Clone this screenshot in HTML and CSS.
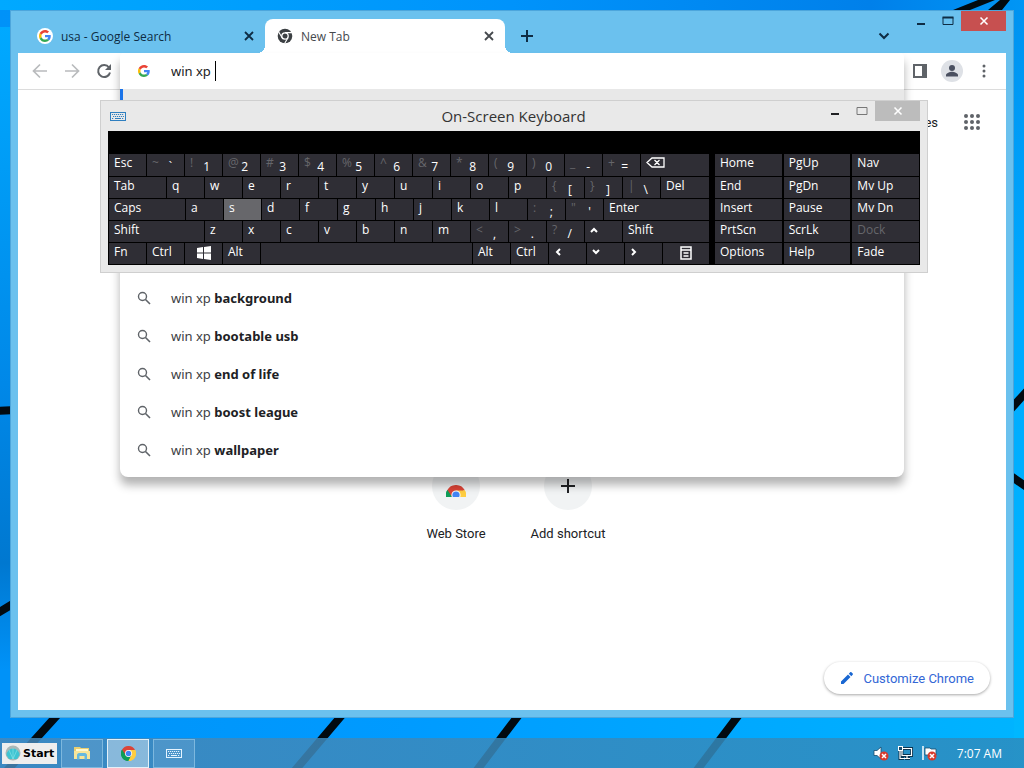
FILE: index.html
```html
<!DOCTYPE html>
<html lang="en">
<head>
  <meta charset="UTF-8">
  <meta name="viewport" content="width=device-width, initial-scale=1.0">
  <title>Desktop</title>
  <link rel="stylesheet" href="styles.css">
</head>
<body>
  <!-- shared icons -->
  <svg class="sprite" aria-hidden="true">
    <symbol id="google" viewBox="0 0 48 48">
      <path fill="#ea4335" d="M24 9.500c3.540 0 6.710 1.220 9.210 3.600l6.850-6.850C35.900 2.380 30.470 0 24 0 14.620 0 6.510 5.380 2.560 13.220l7.980 6.190C12.430 13.720 17.740 9.500 24 9.500z"/>
      <path fill="#4285f4" d="M46.980 24.550c0-1.570-.15-3.090-.38-4.550H24v9.020h12.940c-.58 2.960-2.260 5.480-4.780 7.180l7.730 6c4.510-4.180 7.090-10.360 7.090-17.650z"/>
      <path fill="#fbbc05" d="M10.530 28.590c-.48-1.450-.76-2.990-.76-4.590s.27-3.140.76-4.590l-7.980-6.190C.92 16.460 0 20.120 0 24c0 3.880.92 7.540 2.560 10.780l7.970-6.190z"/>
      <path fill="#34a853" d="M24 48c6.480 0 11.930-2.130 15.890-5.810l-7.730-6c-2.150 1.450-4.920 2.300-8.160 2.300-6.260 0-11.570-4.220-13.470-9.910l-7.980 6.190C6.510 42.620 14.620 48 24 48z"/>
    </symbol>
    <symbol id="chrome" viewBox="0 0 48 48">
      <path fill="#db4437" d="M24 24L3.200 12A24 24 0 0 1 44.800 12z"/>
      <path fill="#0f9d58" d="M24 24L3.200 12A24 24 0 0 0 24 48z"/>
      <path fill="#ffcd40" d="M24 24L24 48A24 24 0 0 0 44.800 12z"/>
      <path fill="#db4437" d="M24 13h20.800L24 12 3.200 12l11.300 17.500z"/>
      <path fill="#0f9d58" d="M3.200 12l11.300 17.500L24 35l9.500-5.500L24 48A24 24 0 0 1 3.200 12z"/>
      <path fill="#ffcd40" d="M24 13h21.300A24 24 0 0 1 24 48l9.500-18.500z"/>
      <circle cx="24" cy="24" r="11" fill="#fff"/>
      <circle cx="24" cy="24" r="8.700" fill="#4285f4"/>
    </symbol>
    <symbol id="close" viewBox="0 0 16 16">
      <path d="M4 4l8 8M12 4l-8 8" fill="none" stroke="currentColor" stroke-width="1.800"/>
    </symbol>
    <symbol id="search" viewBox="0 0 16 16">
      <circle cx="6.500" cy="6.500" r="4" fill="none" stroke="#5f6368" stroke-width="1.400"/>
      <path d="M9.500 9.500l4.500 4.500" stroke="#5f6368" stroke-width="1.600"/>
    </symbol>
    <symbol id="keyboard" viewBox="0 0 16 9">
      <rect x=".5" y=".5" width="15" height="8" fill="none" stroke="currentColor"/>
      <path d="M2 2.500h12M3 4.500h11M2 6.500h2M12 6.500h2" stroke="currentColor" stroke-dasharray="1.200 .8"/>
      <path d="M5 6.500h6" stroke="currentColor"/>
    </symbol>
  </svg>

  <div class="desktop">
    <svg class="wallpaper" viewBox="0 0 1024 768" preserveAspectRatio="none" aria-hidden="true">
      <path d="M953 10L978 0h17l-25 10zM988 10l12-10h10l-8 10z" fill="#020a10"/>
      <g stroke="#020a10" stroke-width="8" fill="none">
        <path d="M-4 411l20-1M-4 614l20-12"/>
        <path d="M1008 412l20-22M1008 474l20 14"/>
        <path d="M60 712L4 774M348 708l-56 66M524 708l-50 66M744 708l-50 66"/>
      </g>
    </svg>

    <div class="window browser">
      <div class="titlebar">
        <div class="tabs">
          <div class="tab">
            <span class="favicon"><svg width="12" height="12"><use href="#google"/></svg></span>
            <span class="tab-title">usa - Google Search</span>
            <button class="tab-close" aria-label="Close tab"><svg width="16" height="16"><use href="#close"/></svg></button>
          </div>
          <div class="tab active">
            <svg width="16" height="16" viewBox="0 0 16 16">
              <circle cx="8" cy="8" r="7.300" fill="#3c4043"/>
              <circle cx="8" cy="8" r="3.200" fill="none" stroke="#fff" stroke-width="1.300"/>
              <path d="M8 4.600h7M5.100 9.700L1.600 3.800M10.900 9.700l-3.400 6" stroke="#fff" stroke-width="1.100"/>
            </svg>
            <span class="tab-title">New Tab</span>
            <button class="tab-close" aria-label="Close tab"><svg width="16" height="16"><use href="#close"/></svg></button>
          </div>
        </div>
        <button class="new-tab" aria-label="New tab"><svg width="14" height="14" viewBox="0 0 14 14"><path d="M7 1v12M1 7h12" stroke="currentColor" stroke-width="2"/></svg></button>
        <button class="tab-search" aria-label="Search tabs"><svg width="12" height="8" viewBox="0 0 12 8"><path d="M1.500 1.500L6 6l4.500-4.500" fill="none" stroke="currentColor" stroke-width="2"/></svg></button>
        <div class="controls">
          <button class="control" aria-label="Minimize"><svg width="12" height="12" viewBox="0 0 12 12"><path d="M2 9h8" stroke="currentColor" stroke-width="2"/></svg></button>
          <button class="control" aria-label="Maximize"><svg width="12" height="12" viewBox="0 0 12 12"><path d="M1 2.500h10v7H1z" fill="none" stroke="currentColor"/><path d="M.5 2.500h11" stroke="currentColor" stroke-width="2"/></svg></button>
          <button class="control close" aria-label="Close"><svg width="14" height="14"><use href="#close"/></svg></button>
        </div>
      </div>

      <div class="toolbar">
        <button class="tool muted" aria-label="Back"><svg width="16" height="16" viewBox="0 0 16 16"><path d="M15 8H2M8 1.500L1.500 8 8 14.500" fill="none" stroke="currentColor" stroke-width="1.700"/></svg></button>
        <button class="tool muted" aria-label="Forward"><svg width="16" height="16" viewBox="0 0 16 16"><path d="M1 8h13M8 1.500L14.500 8 8 14.500" fill="none" stroke="currentColor" stroke-width="1.700"/></svg></button>
        <button class="tool" aria-label="Reload"><svg width="16" height="16" viewBox="0 0 16 16"><path d="M13 4.500A6 6 0 1 0 14 9.500" fill="none" stroke="currentColor" stroke-width="2"/><path d="M15 1v6H9z" fill="currentColor"/></svg></button>
        <div class="omnibox">
          <div class="omnibox-popup">
            <div class="omnibox-row">
              <svg width="12" height="12"><use href="#google"/></svg>
              <label class="query"><input type="text" value="win xp " aria-label="Address and search bar"><span class="caret"></span></label>
            </div>
            <ul class="suggestions">
              <li class="suggestion selected"></li>
              <li class="suggestion first"><svg width="16" height="16"><use href="#search"/></svg><span>win xp <b>background</b></span></li>
              <li class="suggestion"><svg width="16" height="16"><use href="#search"/></svg><span>win xp <b>bootable usb</b></span></li>
              <li class="suggestion"><svg width="16" height="16"><use href="#search"/></svg><span>win xp <b>end of life</b></span></li>
              <li class="suggestion"><svg width="16" height="16"><use href="#search"/></svg><span>win xp <b>boost league</b></span></li>
              <li class="suggestion"><svg width="16" height="16"><use href="#search"/></svg><span>win xp <b>wallpaper</b></span></li>
            </ul>
          </div>
        </div>
        <button class="tool" aria-label="Side panel"><svg width="14" height="14" viewBox="0 0 14 14"><rect x="1" y="1" width="12" height="12" fill="none" stroke="currentColor" stroke-width="2"/><path d="M9 1h4v12H9z" fill="currentColor"/></svg></button>
        <button class="tool" aria-label="Profile"><svg width="22" height="22" viewBox="0 0 22 22"><circle cx="11" cy="11" r="11" fill="#dee1e6"/><circle cx="11" cy="8" r="3" fill="#4a5060"/><path d="M5 16.500V15c0-2 4-3.300 6-3.300s6 1.300 6 3.300v1.500z" fill="#4a5060"/></svg></button>
        <button class="tool" aria-label="Menu"><svg width="4" height="14" viewBox="0 0 4 14" fill="currentColor"><circle cx="2" cy="2" r="1.500"/><circle cx="2" cy="7" r="1.500"/><circle cx="2" cy="12" r="1.500"/></svg></button>
      </div>

      <div class="page">
        <div class="page-header">
          <a href="#">Images</a>
          <button class="apps" aria-label="Google apps">
            <svg width="18" height="18" viewBox="0 0 18 18" fill="#5f6368"><circle cx="3" cy="3" r="2"/><circle cx="9" cy="3" r="2"/><circle cx="15" cy="3" r="2"/><circle cx="3" cy="9" r="2"/><circle cx="9" cy="9" r="2"/><circle cx="15" cy="9" r="2"/><circle cx="3" cy="15" r="2"/><circle cx="9" cy="15" r="2"/><circle cx="15" cy="15" r="2"/></svg>
          </button>
        </div>
        <div class="shortcuts">
          <a class="shortcut" href="#">
            <span class="tile"><svg width="20" height="22" viewBox="0 -24 48 52.800"><use href="#chrome" width="48" height="48"/></svg></span>
            <span>Web Store</span>
          </a>
          <a class="shortcut" href="#">
            <span class="tile"><svg width="14" height="14" viewBox="0 0 14 14"><path d="M7 0v14M0 7h14" stroke="#202124" stroke-width="2"/></svg></span>
            <span>Add shortcut</span>
          </a>
        </div>
        <button class="customize">
          <svg width="14" height="14" viewBox="0 0 14 14" fill="#1967d2"><path d="M1 10.500V13h2.500l7-7L8 3.500zM8.800 2.700l1.400-1.400c.4-.4.800-.4 1.200 0l1.300 1.300c.4.400.4.800 0 1.200l-1.400 1.400z"/></svg>
          Customize Chrome
        </button>
      </div>
    </div>

    <div class="window osk">
      <div class="osk-title">
        <svg class="osk-icon" width="16" height="9"><use href="#keyboard"/></svg>
        <span class="osk-name">On-Screen Keyboard</span>
        <div class="controls">
          <button class="control" aria-label="Minimize"><svg width="12" height="12" viewBox="0 0 12 12"><path d="M2 9h8" stroke="currentColor" stroke-width="2"/></svg></button>
          <button class="control faded" aria-label="Maximize"><svg width="12" height="12" viewBox="0 0 12 12"><path d="M1 2.500h10v7H1z" fill="none" stroke="currentColor"/></svg></button>
          <button class="control close" aria-label="Close"><svg width="14" height="14"><use href="#close"/></svg></button>
        </div>
      </div>
      <div class="osk-body">
        <div class="keys">
          <div class="row tall">
            <button class="key">Esc</button>
            <button class="key dual"><i>~</i><span>`</span></button>
            <button class="key dual"><i>!</i><span>1</span></button>
            <button class="key dual"><i>@</i><span>2</span></button>
            <button class="key dual"><i>#</i><span>3</span></button>
            <button class="key dual"><i>$</i><span>4</span></button>
            <button class="key dual"><i>%</i><span>5</span></button>
            <button class="key dual"><i>^</i><span>6</span></button>
            <button class="key dual"><i>&amp;</i><span>7</span></button>
            <button class="key dual"><i>*</i><span>8</span></button>
            <button class="key dual"><i>(</i><span>9</span></button>
            <button class="key dual"><i>)</i><span>0</span></button>
            <button class="key dual"><i>_</i><span>-</span></button>
            <button class="key dual"><i>+</i><span>=</span></button>
            <button class="key fill" aria-label="Backspace"><svg width="19" height="11" viewBox="0 0 19 11"><path d="M1 5.500L6 1h12v9H6zM8.500 3l5 5M13.500 3l-5 5" fill="none" stroke="#fff" stroke-width="1.300"/></svg></button>
          </div>
          <div class="row">
            <button class="key tab-key">Tab</button>
            <button class="key">q</button>
            <button class="key">w</button>
            <button class="key">e</button>
            <button class="key">r</button>
            <button class="key">t</button>
            <button class="key">y</button>
            <button class="key">u</button>
            <button class="key">i</button>
            <button class="key">o</button>
            <button class="key">p</button>
            <button class="key dual"><i>{</i><span>[</span></button>
            <button class="key dual"><i>}</i><span>]</span></button>
            <button class="key dual"><i>|</i><span>\</span></button>
            <button class="key fill">Del</button>
          </div>
          <div class="row">
            <button class="key caps-key">Caps</button>
            <button class="key">a</button>
            <button class="key pressed">s</button>
            <button class="key">d</button>
            <button class="key">f</button>
            <button class="key">g</button>
            <button class="key">h</button>
            <button class="key">j</button>
            <button class="key">k</button>
            <button class="key">l</button>
            <button class="key dual"><i>:</i><span>;</span></button>
            <button class="key dual"><i>"</i><span>'</span></button>
            <button class="key fill">Enter</button>
          </div>
          <div class="row">
            <button class="key shift-key">Shift</button>
            <button class="key">z</button>
            <button class="key">x</button>
            <button class="key">c</button>
            <button class="key">v</button>
            <button class="key">b</button>
            <button class="key">n</button>
            <button class="key">m</button>
            <button class="key dual"><i>&lt;</i><span>,</span></button>
            <button class="key dual"><i>&gt;</i><span>.</span></button>
            <button class="key dual"><i>?</i><span>/</span></button>
            <button class="key" aria-label="Up"><svg width="8" height="12" viewBox="0 0 8 12"><path d="M1 8l3-3 3 3" fill="none" stroke="#fff" stroke-width="2"/></svg></button>
            <button class="key fill">Shift</button>
          </div>
          <div class="row">
            <button class="key">Fn</button>
            <button class="key">Ctrl</button>
            <button class="key icon-key" aria-label="Windows"><svg width="14" height="14" viewBox="0 0 14 14" fill="#fff"><path d="M0 2l6-1v5.500H0zM7 .9L14 0v6.500H7zM0 7.500h6V13l-6-1zM7 7.500h7V14l-7-.9z"/></svg></button>
            <button class="key">Alt</button>
            <button class="key fill" aria-label="Space"></button>
            <button class="key">Alt</button>
            <button class="key">Ctrl</button>
            <button class="key" aria-label="Left"><svg width="8" height="12" viewBox="0 0 8 12"><path d="M6 3L3 6l3 3" fill="none" stroke="#fff" stroke-width="2"/></svg></button>
            <button class="key" aria-label="Down"><svg width="8" height="12" viewBox="0 0 8 12"><path d="M1 4l3 3 3-3" fill="none" stroke="#fff" stroke-width="2"/></svg></button>
            <button class="key" aria-label="Right"><svg width="8" height="12" viewBox="0 0 8 12"><path d="M2 3l3 3-3 3" fill="none" stroke="#fff" stroke-width="2"/></svg></button>
            <button class="key menu-key icon-key" aria-label="Application menu"><svg width="12" height="14" viewBox="0 0 12 14"><path d="M1 1h10v12H1zM1 4h10M3.500 7h5M3.500 10h5" fill="none" stroke="#fff" stroke-width="1.500"/></svg></button>
          </div>
        </div>
        <div class="nav-keys">
          <div class="row tall"><button class="key fill">Home</button><button class="key fill">PgUp</button><button class="key fill">Nav</button></div>
          <div class="row"><button class="key fill">End</button><button class="key fill">PgDn</button><button class="key fill">Mv Up</button></div>
          <div class="row"><button class="key fill">Insert</button><button class="key fill">Pause</button><button class="key fill">Mv Dn</button></div>
          <div class="row"><button class="key fill">PrtScn</button><button class="key fill">ScrLk</button><button class="key fill" disabled>Dock</button></div>
          <div class="row"><button class="key fill">Options</button><button class="key fill">Help</button><button class="key fill">Fade</button></div>
        </div>
      </div>
    </div>

    <div class="taskbar">
      <button class="start">
        <svg width="16" height="16" viewBox="0 0 16 16"><circle cx="8" cy="8" r="7.500" fill="#a9b8b8"/><path d="M1.500 10a6.500 6.500 0 1 1 13 0l-2.500 4H4z" fill="#3fc4d2"/><path d="M8 14V3M8 14L4 5M8 14l4-9" stroke="#8be6ea" stroke-width=".6"/></svg>
        Start
      </button>
      <button class="task" aria-label="File Explorer"><svg width="16" height="14" viewBox="0 0 16 14"><path d="M0 1h6l1 1h8v11H0z" fill="#e9cf72"/><path d="M2 3h12v3H2z" fill="#fff8cf"/><path d="M0 5h16v8H0z" fill="#f6e59a"/><path d="M3 13.500V9c0-1 1-2 2-2h6c1 0 2 1 2 2v4.500h-2.500V10h-5v3.500z" fill="#65b9df"/></svg></button>
      <button class="task current" aria-label="Google Chrome"><svg width="15" height="15"><use href="#chrome"/></svg></button>
      <button class="task" aria-label="On-Screen Keyboard"><svg width="16" height="9"><use href="#keyboard"/></svg></button>
      <div class="tray">
        <svg width="16" height="16" viewBox="0 0 16 16"><path d="M1 5.500h3L8 2v12l-4-3.500H1z" fill="#fff" stroke="#174b6d" stroke-width=".8"/><circle cx="11" cy="11" r="4.500" fill="#d73a2d"/><path d="M9 9l4 4M13 9l-4 4" stroke="#fff" stroke-width="1.500"/></svg>
        <svg width="16" height="16" viewBox="0 0 16 16"><path d="M5 3.500h9.500v7H5zM8 13.500h5M10.500 11v2M3 6v7.500h4" fill="none" stroke="#0d3550" stroke-width="3"/><path d="M5 3.500h9.500v7H5zM7 13.500h6M10 11v2M3 6v7.500h4" fill="none" stroke="#fff" stroke-width="1.200"/><rect x="1.500" y="1.500" width="4" height="4" fill="#174b6d" stroke="#fff"/></svg>
        <svg width="16" height="16" viewBox="0 0 16 16"><path d="M2 1v14" stroke="#fff" stroke-width="1.500"/><path d="M4 3h5l1 1h5v6H4z" fill="#fff" stroke="#174b6d" stroke-width=".8"/><circle cx="11" cy="11" r="4.500" fill="#d73a2d"/><path d="M9 9l4 4M13 9l-4 4" stroke="#fff" stroke-width="1.500"/></svg>
        <span class="clock">7:07 AM</span>
      </div>
    </div>
  </div>
</body>
</html>
```
FILE: styles.css
```css
* {
  margin: 0;
  padding: 0;
  box-sizing: border-box;
}
body {
  font-family: "Open Sans", "Noto Sans", sans-serif;
  font-size: 12px;
  color: #202124;
}
button {
  background: none;
  border: none;
  color: inherit;
  font: inherit;
}
a {
  color: inherit;
  text-decoration: none;
}
svg {
  display: block;
  flex-shrink: 0;
}
.sprite {
  position: absolute;
  width: 0;
  height: 0;
}
.desktop {
  position: relative;
  height: 100vh;
  overflow: hidden;
  display: flex;
  flex-direction: column;
  justify-content: flex-end;
  background: linear-gradient(90deg, #0092f8 0%, #009bff 40%, #00b4ff 100%);
}
.desktop::before {
  content: "";
  position: absolute;
  inset: 0;
  background:
    linear-gradient(90deg, #00a9ff 0%, #0093fb 50%, #0080ea 85%, #0096f5 100%) top / 100% 10px no-repeat,
    linear-gradient(#00a9ff 0%, #0088e8 50%, #0078d0 75%, #0092f8 90%) left / 10px 93% no-repeat,
    linear-gradient(#0092f0 0%, #00aaff 40%, #00b8ff 100%) right / 10px 100% no-repeat;
}
.wallpaper {
  position: absolute;
  inset: 0;
  width: 100%;
  height: 100%;
}
.window {
  position: absolute;
}

/* browser */
.browser {
  z-index: 1;
  top: 10px;
  right: 10px;
  bottom: 50px;
  left: 10px;
  display: flex;
  flex-direction: column;
  padding: 0 7px 7px;
  background: #6bc1ee;
  border: 1px solid #4da6dc;
}
.titlebar {
  display: flex;
  height: 42px;
  color: #0e2c44;
}
.tabs {
  display: flex;
  align-items: flex-end;
  padding-left: 7px;
}
.tab {
  display: flex;
  align-items: center;
  gap: 8px;
  width: 240px;
  height: 34px;
  padding: 0 8px 0 12px;
}
.tab.active {
  position: relative;
  background: #fff;
  border-radius: 8px 8px 0 0;
  color: #45494d;
}
.tab.active::before,
.tab.active::after {
  content: "";
  position: absolute;
  bottom: 0;
  width: 8px;
  height: 8px;
}
.tab.active::before {
  right: 100%;
  background: radial-gradient(circle at 0 0, transparent 8px, #fff 8px);
}
.tab.active::after {
  left: 100%;
  background: radial-gradient(circle at 100% 0, transparent 8px, #fff 8px);
}
.favicon {
  display: flex;
  align-items: center;
  justify-content: center;
  width: 16px;
  height: 16px;
  border-radius: 50%;
  background: #fff;
}
.tab-title {
  flex: 1;
}
.new-tab {
  align-self: flex-end;
  height: 34px;
  padding: 0 15px;
}
.tab-search {
  align-self: flex-end;
  height: 34px;
  margin-left: auto;
  padding: 0 17px 0 8px;
}
.controls {
  display: flex;
  align-items: flex-start;
}
.control {
  display: flex;
  align-items: center;
  justify-content: center;
  width: 27px;
  height: 20px;
}
.control.close {
  width: 45px;
  background: #c75050;
  color: #fff;
}
.toolbar {
  display: flex;
  align-items: center;
  height: 37px;
  padding: 0 6px;
  background: #fff;
  border-bottom: 1px solid #dcdcdc;
  color: #5f6368;
}
.tool {
  display: flex;
  align-items: center;
  justify-content: center;
  width: 32px;
  height: 36px;
}
.tool.muted {
  color: #b9bbbd;
}
.omnibox {
  position: relative;
  align-self: stretch;
  flex: 1;
}
.omnibox-popup {
  position: absolute;
  z-index: 1;
  top: 0;
  right: 0;
  left: 0;
  padding-bottom: 8px;
  background: #fff;
  border-radius: 4px 4px 8px 8px;
  box-shadow: 0 8px 10px rgba(0, 0, 0, 0.3);
}
.omnibox-row {
  display: flex;
  align-items: center;
  gap: 21px;
  height: 36px;
  padding-left: 18px;
}
.query {
  display: flex;
  align-items: center;
  flex: 1;
  height: 22px;
}
.query input {
  width: 44px;
  border: none;
  outline: none;
  background: none;
  color: #202124;
  font: 13px "Noto Sans", sans-serif;
}
.caret {
  width: 1px;
  height: 20px;
  background: #000;
}
.suggestions {
  list-style: none;
}
.suggestion {
  display: flex;
  align-items: center;
  gap: 19px;
  height: 38px;
  padding-left: 16px;
  font: 13px "Noto Sans", sans-serif;
  color: #3c4043;
}
.suggestion b {
  color: #202124;
}
.suggestion.selected {
  background: #e8e8e8;
  border-left: 3px solid #1a73e8;
}
.suggestion.first {
  margin-top: 152px;
}
.page {
  position: relative;
  flex: 1;
  background: #fff;
  font-family: Roboto, sans-serif;
  font-size: 13px;
}
.page-header {
  display: flex;
  align-items: center;
  justify-content: flex-end;
  gap: 25px;
  height: 64px;
  padding-right: 25px;
}
.shortcuts {
  display: flex;
  justify-content: center;
  padding-top: 308px;
}
.shortcut {
  display: flex;
  flex-direction: column;
  align-items: center;
  gap: 16px;
  width: 112px;
  line-height: 16px;
}
.tile {
  display: flex;
  align-items: center;
  justify-content: center;
  width: 48px;
  height: 48px;
  border-radius: 50%;
  background: #f1f3f4;
}
.customize {
  position: absolute;
  right: 16px;
  bottom: 16px;
  display: flex;
  align-items: center;
  gap: 9px;
  height: 32px;
  padding: 0 16px;
  border-radius: 16px;
  background: #fff;
  box-shadow: 0 1px 3px rgba(0, 0, 0, 0.35);
  color: #3367d6;
}

/* on-screen keyboard */
.osk {
  z-index: 2;
  top: 100px;
  left: 100px;
  width: 828px;
  padding: 0 7px 7px;
  background: #e9e9e9;
  border: 1px solid #cfcfcf;
}
.osk-title {
  display: flex;
  height: 30px;
  align-items: center;
}
.osk-icon {
  margin-left: 2px;
  color: #2f7fc0;
}
.osk-name {
  flex: 1;
  padding-left: 80px;
  font-size: 15px;
  text-align: center;
  color: #333;
}
.osk .controls {
  align-self: flex-start;
}
.osk .control.faded {
  color: #777;
}
.osk .control.close {
  background: #bcbcbc;
}
.osk-body {
  display: flex;
  gap: 6px;
  padding: 23px 1px 1px;
  background: #000;
}
.keys {
  flex: 1;
}
.nav-keys {
  width: 204px;
}
.keys,
.nav-keys {
  display: flex;
  flex-direction: column;
  gap: 1px;
}
.row {
  display: flex;
  gap: 1px;
  height: 21px;
}
.row.tall {
  height: 22px;
}
.key {
  display: flex;
  align-items: flex-start;
  width: 37px;
  padding-left: 5px;
  background: #2f2e35;
  color: #fff;
  line-height: 18px;
}
.key svg {
  margin-top: 3px;
}
.key.fill {
  flex: 1;
}
.key.pressed {
  background: #67676b;
}
.key:disabled {
  color: #66666b;
}
.key.dual {
  justify-content: space-between;
  padding-right: 12px;
}
.key.dual i {
  color: #66666b;
  font-style: normal;
}
.key.dual span {
  padding-top: 4px;
}
.key.icon-key {
  justify-content: center;
  padding-left: 0;
}
.key.tab-key {
  width: 57px;
}
.key.caps-key {
  width: 76px;
}
.key.shift-key {
  width: 95px;
}
.key.menu-key {
  width: 46px;
}
.nav-keys .row {
  gap: 2px;
}

/* taskbar */
.taskbar {
  position: relative;
  display: flex;
  align-items: center;
  gap: 4px;
  height: 30px;
  padding-left: 2px;
  background: linear-gradient(90deg, rgba(70, 135, 185, 0.85), rgba(45, 140, 190, 0.85));
}
.start {
  display: flex;
  align-items: center;
  gap: 2px;
  width: 55px;
  height: 21px;
  padding-left: 3px;
  background: #eeeeee;
  color: #000;
  font-family: "DejaVu Sans", sans-serif;
  font-size: 11px;
  font-weight: bold;
}
.task {
  display: flex;
  align-items: center;
  justify-content: center;
  width: 42px;
  height: 29px;
  border: 1px solid #7db8de;
  background: rgba(255, 255, 255, 0.1);
  color: #e6f4ff;
}
.task.current {
  border-color: #e3f0f8;
  background: rgba(255, 255, 255, 0.4);
}
.tray {
  display: flex;
  align-items: center;
  gap: 8px;
  margin-left: auto;
  padding-right: 22px;
  color: #fff;
}
.clock {
  padding-left: 12px;
}
```
